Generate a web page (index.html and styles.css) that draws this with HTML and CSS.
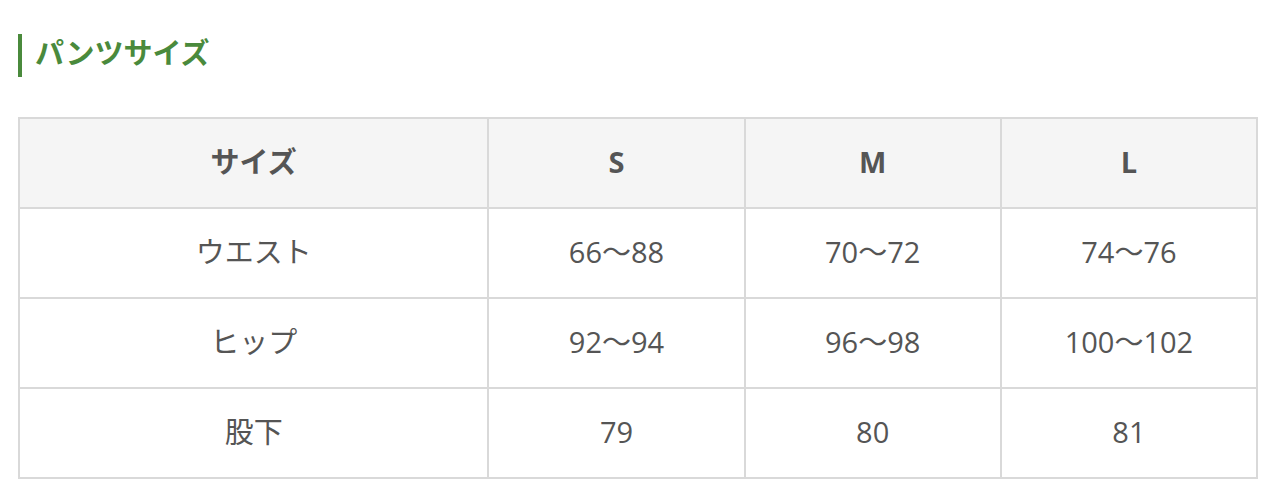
FILE: index.html
```html
<!DOCTYPE html>
<html lang="ja">
<head>
<meta charset="utf-8">
<title>パンツサイズ</title>
<link rel="stylesheet" href="styles.css">
</head>
<body>
<div class="page">
  <h2 class="heading">パンツサイズ</h2>
  <table class="size-table">
    <colgroup>
      <col class="col-label">
      <col class="col-size">
      <col class="col-size">
      <col class="col-size">
    </colgroup>
    <thead>
      <tr><th>サイズ</th><th>S</th><th>M</th><th>L</th></tr>
    </thead>
    <tbody>
      <tr><td>ウエスト</td><td>66～88</td><td>70～72</td><td>74～76</td></tr>
      <tr><td>ヒップ</td><td>92～94</td><td>96～98</td><td>100～102</td></tr>
      <tr><td>股下</td><td>79</td><td>80</td><td>81</td></tr>
    </tbody>
  </table>
</div>
</body>
</html>
```
FILE: styles.css
```css
html, body {
  margin: 0;
  padding: 0;
  background: #fff;
}
.page {
  padding: 34px 22px 0 18px;
  font-family: "Open Sans", "Noto Sans CJK JP", sans-serif;
  color: #555;
}
.heading {
  margin: 0 0 40px 0;
  height: 43px;
  line-height: 34px;
  border-left: 4px solid #4a8a3c;
  padding-left: 13px;
  font-family: "Noto Sans CJK JP", sans-serif;
  font-size: 29px;
  font-weight: 700;
  color: #4a8a3c;
}
.size-table {
  width: 1240px;
  border-collapse: collapse;
  table-layout: fixed;
  font-size: 29px;
  line-height: 1.2;
}
.col-label { width: 469px; }
.col-size { width: 256px; }
.size-table th,
.size-table td {
  border: 2px solid #d9d9d9;
  height: 86px;
  padding: 0 0 2px 0;
  text-align: center;
  vertical-align: middle;
}
.size-table th {
  background: #f5f5f5;
  font-weight: 700;
  color: #555;
}
.size-table td {
  font-weight: 400;
}
```
